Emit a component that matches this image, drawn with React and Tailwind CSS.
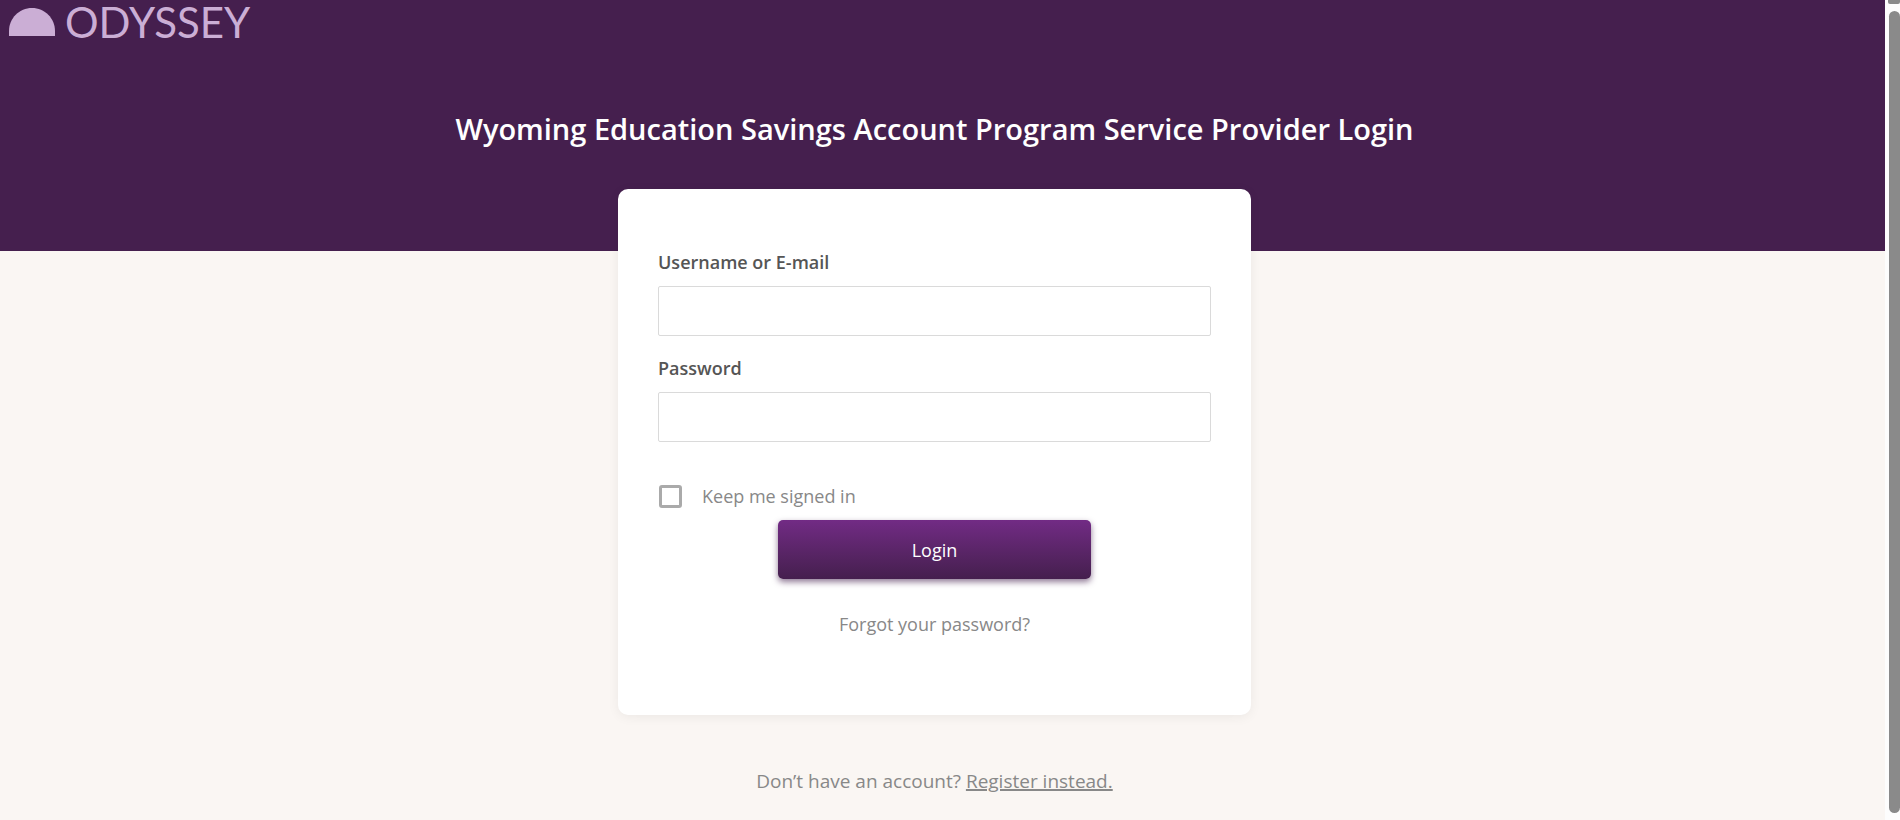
import { useState } from "react"

function Logo() {
    return (
        <a href="/" className="flex items-end gap-2.5 pl-[9px] pt-2 text-[#cbaed5]">
            <svg viewBox="0 0 46 28" className="w-[46px] h-7" fill="currentColor" aria-hidden="true">
                <path d="M0 28V23C0 10.3 10.3 0 23 0s23 10.3 23 23v5z" />
            </svg>
            <span className="font-['Lato',sans-serif] text-[42px] leading-7">ODYSSEY</span>
        </a>
    )
}

function Field({ id, label, type, value, onChange }) {
    return (
        <div className="flex flex-col gap-2">
            <label htmlFor={id} className="text-lg leading-8 font-semibold text-[#555555]">
                {label}
            </label>
            <input
                id={id}
                type={type}
                value={value}
                onChange={(e) => onChange(e.target.value)}
                className="h-[50px] w-full rounded-xs border border-[#dadada] bg-white px-3 text-lg outline-none focus:border-[#722b85]"
            />
        </div>
    )
}

function LoginForm() {
    const [username, setUsername] = useState("")
    const [password, setPassword] = useState("")

    return (
        <form
            onSubmit={(e) => e.preventDefault()}
            className="w-full max-w-[633px] rounded-[10px] bg-white px-10 pt-[57px] pb-[77px] shadow-[0_2px_12px_rgba(0,0,0,0.06)]"
        >
            <div className="flex flex-col gap-4">
                <Field id="username" label="Username or E-mail" type="text" value={username} onChange={setUsername} />
                <Field id="password" label="Password" type="password" value={password} onChange={setPassword} />
            </div>

            <label className="mt-10 flex items-center gap-5 pl-px text-lg leading-7 text-[#888888]">
                <input
                    type="checkbox"
                    className="size-[23px] appearance-none rounded-[3px] border-3 border-[#aaaaaa] bg-white checked:bg-[#722b85]"
                />
                Keep me signed in
            </label>

            <div className="mt-2.5 flex flex-col items-center gap-[31px]">
                <button
                    type="submit"
                    className="h-[59px] w-full max-w-[313px] rounded-[5px] bg-linear-to-b from-[#722b85] to-[#451f4e] text-lg text-white shadow-[0_3px_6px_rgba(69,31,78,0.6)]"
                >
                    Login
                </button>
                <a href="#forgot" className="text-lg leading-7 text-[#888888]">
                    Forgot your password?
                </a>
            </div>
        </form>
    )
}

function Scrollbar() {
    return (
        <div className="flex w-[15px] shrink-0 flex-col items-end bg-[#fdfdfd]" aria-hidden="true">
            <div className="h-1 w-3 rounded-b-xs bg-[#8a8a8a]" />
            <div className="mt-[7px] mb-[7px] w-[11px] grow rounded-full bg-[#8a8a8a]" />
        </div>
    )
}

export default function App() {
    return (
        <div className="flex min-h-screen font-['Open_Sans','Noto_Sans',sans-serif]">
            <div className="min-w-0 grow bg-[#faf6f3]">
                <header className="h-[251px] bg-[#451f4e]">
                    <Logo />
                    <h1 className="pt-[73px] pr-4 text-center text-[29px] leading-10 font-semibold text-white">
                        Wyoming Education Savings Account Program Service Provider Login
                    </h1>
                </header>

                <main className="-mt-[62px] flex flex-col items-center pr-4">
                    <LoginForm />
                    <p className="mt-[52px] text-[19px] leading-7 text-[#888888]">
                        Don’t have an account?{" "}
                        <a href="#register" className="underline decoration-2">
                            Register instead.
                        </a>
                    </p>
                </main>
            </div>
            <Scrollbar />
        </div>
    )
}
